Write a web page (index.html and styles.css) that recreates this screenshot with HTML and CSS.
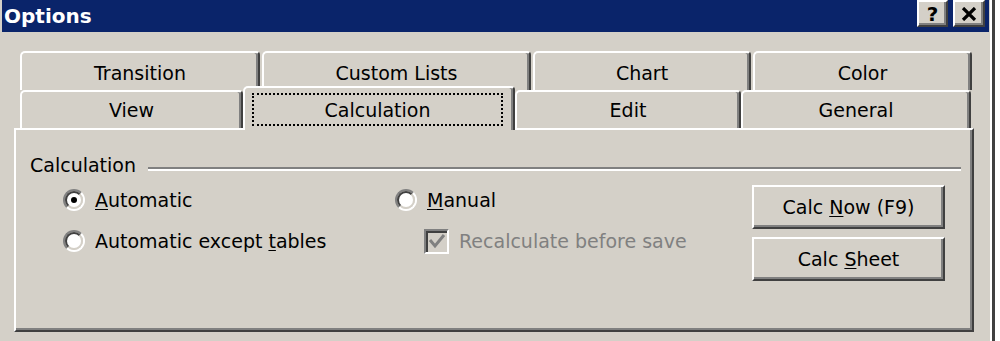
FILE: index.html
```html
<!DOCTYPE html>
<html lang="en">
<head>
  <meta charset="UTF-8">
  <title>Options</title>
  <link rel="stylesheet" href="styles.css">
</head>
<body>
  <div class="window">
    <div class="titlebar">
      <span class="title">Options</span>
      <div class="caption-buttons">
        <button type="button" class="cap-btn help">?</button>
        <button type="button" class="cap-btn close">
          <svg width="16" height="14" viewBox="0 0 16 14"><path d="M2 1 L14 13 M14 1 L2 13" stroke="#000" stroke-width="3.2" fill="none"/></svg>
        </button>
      </div>
    </div>

    <div class="dialog">
      <div class="tabs">
        <div class="tab-row back">
          <div class="tab w-transition">Transition</div>
          <div class="tab w-lists">Custom Lists</div>
          <div class="tab w-chart">Chart</div>
          <div class="tab w-color">Color</div>
        </div>
        <div class="tab-row front">
          <div class="tab w-view">View</div>
          <div class="tab w-calc selected"><span class="focus">Calculation</span></div>
          <div class="tab w-edit">Edit</div>
          <div class="tab w-general">General</div>
        </div>
      </div>

      <div class="panel">
        <div class="group-head">
          <span>Calculation</span>
          <span class="etched"></span>
        </div>
        <div class="options">
          <div class="col col-left">
            <label class="item">
              <span class="radio"><span class="radio-in"><span class="dot"></span></span></span>
              <span><u>A</u>utomatic</span>
            </label>
            <label class="item">
              <span class="radio"><span class="radio-in"></span></span>
              <span>Automatic except <u>t</u>ables</span>
            </label>
          </div>
          <div class="col col-mid">
            <label class="item">
              <span class="radio"><span class="radio-in"></span></span>
              <span><u>M</u>anual</span>
            </label>
            <label class="item indent disabled">
              <span class="check">
                <svg width="20" height="21" viewBox="0 0 20 21"><path d="M3 9 L8 15 L17 4" stroke="#808080" stroke-width="3" fill="none"/></svg>
              </span>
              <span>Recalculate before save</span>
            </label>
          </div>
          <div class="col col-buttons">
            <button type="button" class="btn">Calc <u>N</u>ow (F9)</button>
            <button type="button" class="btn">Calc <u>S</u>heet</button>
          </div>
        </div>
      </div>
    </div>
  </div>
</body>
</html>
```

FILE: styles.css
```css
body{
  margin: 0;
  background: #fff;
  font-family: "DejaVu Sans", Verdana, sans-serif;
  font-size: 19px;
  color: #000;
}
u{
  text-underline-offset: 2px;
}
.window{
  width: 995px;
  height: 341px;
  box-sizing: border-box;
  padding-left: 2px;
  background: #d4d0c8;
  border-right: 3px solid #404040;
  box-shadow: inset -2px 0 0 #fff;
  overflow: hidden;
}

/* title bar */
.titlebar{
  height: 32px;
  margin-right: 3px;
  background: #0a246a;
  display: flex;
  align-items: center;
  justify-content: space-between;
}
.title{
  padding-left: 2px;
  color: #fff;
  font-weight: bold;
  font-size: 20px;
}
.caption-buttons{
  align-self: flex-start;
  display: flex;
  gap: 5px;
  margin-right: 4px;
}
.cap-btn{
  width: 32px;
  height: 27px;
  padding: 0;
  background: #d4d0c8;
  border: 2px solid;
  border-color: #fff #404040 #404040 #fff;
  box-shadow: inset -2px -2px 0 #808080;
  display: flex;
  align-items: center;
  justify-content: center;
  font-family: "DejaVu Sans", sans-serif;
  font-weight: bold;
  font-size: 20px;
  line-height: 1;
}
.cap-btn.help{
  width: 31px;
}

/* tabs */
.dialog{
  padding-left: 12px;
}
.tabs{
  margin-top: 19px;
  padding-left: 6px;
}
.tab-row{
  display: flex;
}
.tab-row.back{
  gap: 2px;
}
.tab{
  box-sizing: border-box;
  border: 2px solid;
  border-bottom: none;
  border-color: #fff #404040 transparent #fff;
  border-radius: 5px 4px 0 0;
  box-shadow: inset -2px 0 0 #808080;
  display: flex;
  align-items: center;
  justify-content: center;
  background: #d4d0c8;
}
.back .tab{
  height: 39px;
  padding-top: 3px;
}
.front .tab{
  height: 38px;
}
.w-transition{ width: 240px; }
.w-lists{ width: 269px; }
.w-chart{ width: 218px; }
.w-color{ width: 219px; }
.w-view{ width: 223px; }
.w-calc{ width: 272px; }
.w-edit{ width: 226px; }
.w-general{ width: 230px; }

.front .tab.selected{
  position: relative;
  z-index: 1;
  height: 44px;
  margin-top: -4px;
  margin-bottom: -2px;
  padding: 5px 10px 4px 7px;
  align-items: stretch;
}
.focus{
  flex: 1;
  border: 2px dotted #000;
  display: flex;
  align-items: center;
  justify-content: center;
}

/* panel */
.panel{
  width: 960px;
  height: 204px;
  box-sizing: border-box;
  border: 2px solid;
  border-color: #fff #404040 #404040 #fff;
  box-shadow: inset -2px -2px 0 #808080;
  padding: 24px 11px 0 14px;
}
.group-head{
  display: flex;
  align-items: center;
  height: 22px;
}
.etched{
  flex: 1;
  margin-left: 12px;
  margin-top: 7px;
  border-top: 2px solid #808080;
  border-bottom: 2px solid #fff;
}
.options{
  display: flex;
  margin-top: 9px;
}
.col{
  display: flex;
  flex-direction: column;
}
.col-left{
  width: 332px;
  margin-left: 33px;
  gap: 11px;
}
.col-mid{
  width: 357px;
  gap: 11px;
}
.col-buttons{
  width: 193px;
  gap: 8px;
}
.item{
  height: 30px;
  display: flex;
  align-items: center;
  gap: 10px;
}
.item.indent{
  margin-left: 29px;
}
.item.disabled{
  color: #808080;
}

.radio{
  width: 22px;
  height: 22px;
  box-sizing: border-box;
  border-radius: 50%;
  border: 2px solid;
  border-color: #808080 #fff #fff #808080;
}
.radio-in{
  width: 100%;
  height: 100%;
  box-sizing: border-box;
  border-radius: 50%;
  border: 2px solid;
  border-color: #404040 #d4d0c8 #d4d0c8 #404040;
  background: #fff;
  display: flex;
  align-items: center;
  justify-content: center;
}
.dot{
  width: 6px;
  height: 6px;
  border-radius: 50%;
  background: #000;
}
.check{
  width: 25px;
  height: 25px;
  box-sizing: border-box;
  border: 2px solid;
  border-color: #808080 #fff #fff #808080;
  box-shadow: inset 2px 2px 0 #404040, inset -2px -2px 0 #d4d0c8;
  background: #d4d0c8;
  display: flex;
  align-items: center;
  justify-content: center;
}

.btn{
  height: 44px;
  background: #d4d0c8;
  border: 2px solid;
  border-color: #fff #404040 #404040 #fff;
  box-shadow: inset -2px -2px 0 #808080;
  font-family: "DejaVu Sans", Verdana, sans-serif;
  font-size: 19px;
  color: #000;
  padding: 0;
}
```
